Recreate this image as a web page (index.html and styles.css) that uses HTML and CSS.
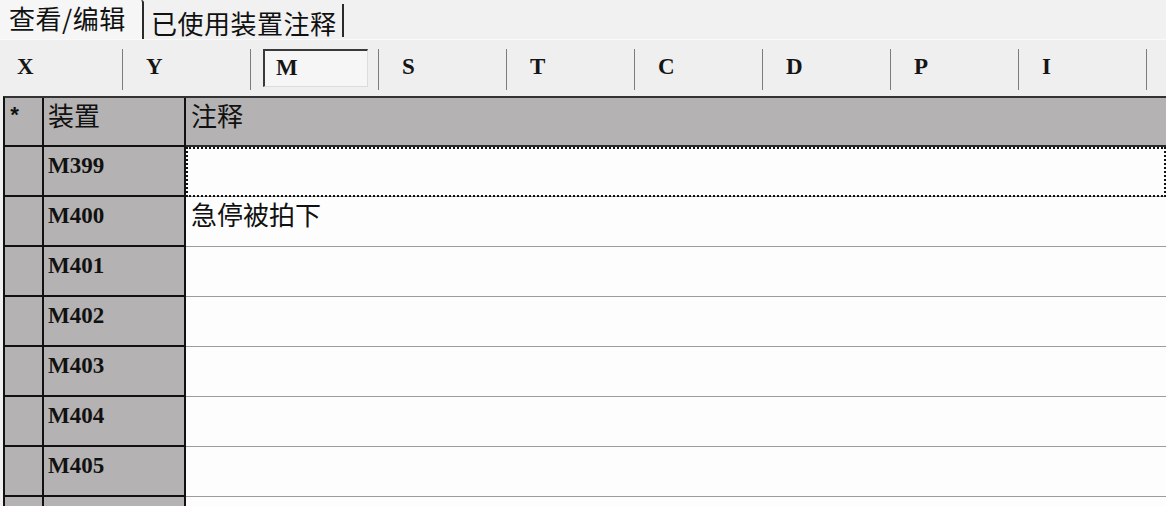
FILE: index.html
```html
<!DOCTYPE html>
<html lang="zh-CN">
<head>
<meta charset="utf-8">
<title>装置注释</title>
<link rel="stylesheet" href="styles.css">
</head>
<body>
<div class="tabs">
  <div class="tab tab-active">查看/编辑</div>
  <div class="tab tab-normal">已使用装置注释</div>
</div>
<div class="toolbar">
  <div class="tool tool-first"><span class="letter">X</span></div>
  <span class="sep"></span>
  <div class="tool"><span class="letter">Y</span></div>
  <span class="sep"></span>
  <div class="tool tool-box"><div class="mbox"><span class="letter">M</span></div></div>
  <span class="sep"></span>
  <div class="tool"><span class="letter">S</span></div>
  <span class="sep"></span>
  <div class="tool"><span class="letter">T</span></div>
  <span class="sep"></span>
  <div class="tool"><span class="letter">C</span></div>
  <span class="sep"></span>
  <div class="tool"><span class="letter">D</span></div>
  <span class="sep"></span>
  <div class="tool"><span class="letter">P</span></div>
  <span class="sep"></span>
  <div class="tool"><span class="letter">I</span></div>
  <span class="sep"></span>
</div>
<div class="grid-wrap">
<div class="grid">
  <div class="cell c1 head"><span class="star">*</span></div>
  <div class="cell c2 head cjk">装置</div>
  <div class="cell c3 head cjk">注释</div>

  <div class="cell c1"></div>
  <div class="cell c2 dev">M399</div>
  <div class="cell c3 focus"></div>

  <div class="cell c1"></div>
  <div class="cell c2 dev">M400</div>
  <div class="cell c3 cjk">急停被拍下</div>

  <div class="cell c1"></div>
  <div class="cell c2 dev">M401</div>
  <div class="cell c3"></div>

  <div class="cell c1"></div>
  <div class="cell c2 dev">M402</div>
  <div class="cell c3"></div>

  <div class="cell c1"></div>
  <div class="cell c2 dev">M403</div>
  <div class="cell c3"></div>

  <div class="cell c1"></div>
  <div class="cell c2 dev">M404</div>
  <div class="cell c3"></div>

  <div class="cell c1"></div>
  <div class="cell c2 dev">M405</div>
  <div class="cell c3"></div>

  <div class="cell c1"></div>
  <div class="cell c2 dev"></div>
  <div class="cell c3"></div>
</div>
</div>
</body>
</html>
```
FILE: styles.css
```css
html, body {
  margin: 0;
  padding: 0;
}
body {
  width: 1166px;
  height: 506px;
  overflow: hidden;
  display: flex;
  flex-direction: column;
  background: #f0f0f0;
  font-family: "Noto Sans CJK SC", "Noto Sans", sans-serif;
  color: #111;
}
.tabs {
  display: flex;
  height: 39px;
  flex: none;
  background: #f1f1f1;
}
.tab {
  font-size: 26px;
  line-height: 30px;
  box-sizing: border-box;
  white-space: nowrap;
  letter-spacing: 0.5px;
}
.tab-active {
  width: 144px;
  padding: 3px 0 0 9px;
  border-right: 2px solid #2a2a2a;
  border-top-right-radius: 3px;
  background: #f6f6f6;
}
.tab-normal {
  width: 200px;
  height: 33px;
  margin-top: 4px;
  padding: 4px 0 0 7px;
  border-right: 2px solid #2a2a2a;
}
.toolbar {
  display: flex;
  flex: none;
  align-items: center;
  height: 57px;
  box-sizing: border-box;
  border-top: 1px solid #fafafa;
  background: #efefef;
}
.tool {
  width: 127px;
  height: 100%;
  box-sizing: border-box;
  display: flex;
  align-items: center;
  padding-left: 23px;
  padding-bottom: 3px;
}
.tool-first {
  width: 122px;
  padding-left: 17px;
}
.tool-box {
  padding-left: 12px;
  padding-bottom: 0;
}
.letter {
  font-family: "Liberation Serif", "DejaVu Serif", serif;
  font-weight: bold;
  font-size: 23px;
  color: #151515;
}
.mbox {
  width: 105px;
  height: 38px;
  box-sizing: border-box;
  border-top: 2px solid #3a3a3a;
  border-left: 2px solid #3a3a3a;
  border-right: 1px solid #dcdcdc;
  border-bottom: 1px solid #dcdcdc;
  background: #f6f6f6;
  display: flex;
  align-items: center;
  padding: 0 0 1px 11px;
}
.sep {
  width: 1px;
  height: 41px;
  background: #7c7c7c;
  margin-top: 2px;
}
.grid-wrap {
  flex: 1;
  overflow: hidden;
}
.grid {
  display: grid;
  grid-template-columns: 39px 142px 1fr;
  margin-left: 3px;
  border-top: 2px solid #333;
  border-left: 2px solid #111;
}
.cell {
  box-sizing: border-box;
  height: 50px;
  line-height: 30px;
}
.cell.head {
  height: 49px;
  border-bottom: 2px solid #111;
}
.c1, .c2 {
  background: #b4b2b2;
  border-right: 2px solid #111;
  border-bottom: 2px solid #111;
}
.c3 {
  background: #fdfdfd;
  border-bottom: 1px solid #9c9c9c;
  padding-left: 5px;
}
.c3.head {
  background: #b4b2b2;
  border-bottom: 2px solid #2a2a2a;
}
.c2 {
  padding-left: 4px;
}
.cjk {
  font-family: "Noto Sans CJK SC", sans-serif;
  font-size: 26px;
  line-height: 34px;
  padding-top: 0;
}
.dev {
  font-family: "Liberation Serif", "DejaVu Serif", serif;
  font-weight: bold;
  font-size: 23px;
  padding-top: 4px;
}
.star {
  display: block;
  font-family: "Liberation Mono", monospace;
  font-weight: bold;
  font-size: 22px;
  padding: 5px 0 0 3px;
}
.focus {
  outline: 2px dotted #111;
  outline-offset: -2px;
}
```
